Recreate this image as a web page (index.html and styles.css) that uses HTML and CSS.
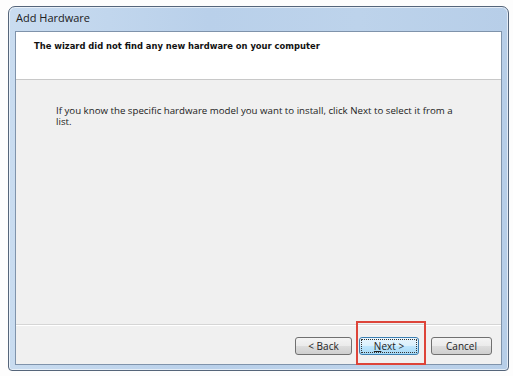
FILE: index.html
```html
<!DOCTYPE html>
<html lang="en">
<head>
  <meta charset="UTF-8">
  <title>Add Hardware</title>
  <link rel="stylesheet" href="styles.css">
</head>
<body>

  <div class="window">
    <div class="titlebar">Add Hardware</div>

    <div class="client">
      <div class="header">
        <h1>The wizard did not find any new hardware on your computer</h1>
      </div>

      <div class="content">
        <p>If you know the specific hardware model you want to install, click Next to select it from a list.</p>
      </div>

      <div class="footer">
        <button class="btn">&lt; Back</button>
        <button class="btn btn-default"><u>N</u>ext &gt;<span class="highlight"></span></button>
        <button class="btn btn-cancel">Cancel</button>
      </div>
    </div>
  </div>

</body>
</html>
```

FILE: styles.css
```css
/* Page */
body {
  margin: 0;
  background-color: #fdfdfd;
  font-family: 'Open Sans', 'Noto Sans', sans-serif;
  color: #1e1e1e;
}

/* Window frame */
.window {
  box-sizing: border-box;
  width: 501px;
  height: 365px;
  margin: 6px 0 0 8px;
  padding: 0 6px 5px 6px;
  border: 1px solid #55657a;
  border-radius: 7px 7px 4px 4px;
  background: linear-gradient(90deg, #c9dcf0 0%, #b9d0ea 40%, #bdd3eb 70%, #b7cee8 100%);
  display: flex;
  flex-direction: column;
  box-shadow: inset 0 0 0 1px rgba(255, 255, 255, 0.6);
}

.titlebar {
  height: 24px;
  line-height: 21px;
  font-size: 11px;
  padding-left: 1px;
  color: #202020;
}

/* Client area */
.client {
  flex: 1;
  display: flex;
  flex-direction: column;
  border: 1px solid #7f93ab;
  background-color: #f0f0f0;
}

.header {
  height: 48px;
  background-color: #fff;
  border-bottom: 1px solid #c8c8c8;
  padding: 8px 0 0 18px;
  box-sizing: border-box;
}

.header h1 {
  margin: 0;
  font-family: 'DejaVu Sans Condensed', 'DejaVu Sans', sans-serif;
  font-stretch: condensed;
  font-size: 9.3px;
  font-weight: bold;
  color: #111;
}

.content {
  flex: 1;
  padding: 25px 40px 0 40px;
}

.content p {
  margin: 0;
  width: 402px;
  font-size: 9.7px;
  line-height: 11px;
  color: #222;
}

/* Footer with buttons */
.footer {
  height: 40px;
  box-sizing: border-box;
  border-top: 1px solid #d5d5d5;
  box-shadow: inset 0 1px 0 #fff;
  display: flex;
  justify-content: flex-end;
  align-items: flex-start;
  padding: 12px 9px 0 0;
  gap: 7px;
}

.btn {
  position: relative;
  width: 57px;
  height: 18px;
  padding: 0;
  font-family: 'Open Sans', 'Noto Sans', sans-serif;
  font-size: 10px;
  color: #222;
  border: 1px solid #707070;
  border-radius: 3px;
  background: linear-gradient(#f4f4f4 0%, #ebebeb 50%, #dddddd 51%, #cfcfcf 100%);
}

.btn-default {
  width: 60px;
  border-color: #3c7fb1;
  background: linear-gradient(#eaf6fd 0%, #d9f0fc 50%, #bee6fd 51%, #a7d9f5 100%);
  outline: 1px dotted #333;
  outline-offset: -3px;
}

.btn-cancel {
  width: 61px;
  margin-left: 5px;
}

/* Red box drawn over the Next button */
.highlight {
  position: absolute;
  left: -4px;
  right: -8px;
  top: -17px;
  bottom: -11px;
  border: 2px solid #dd4439;
}
```
